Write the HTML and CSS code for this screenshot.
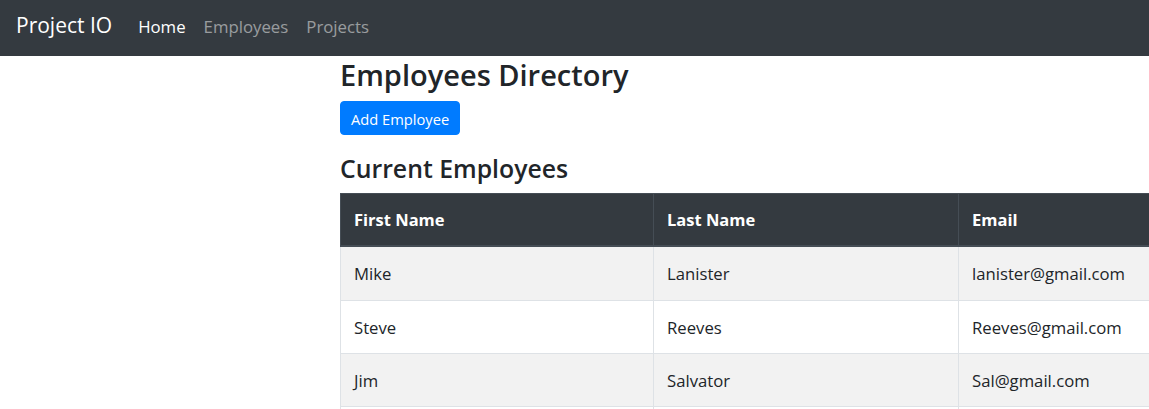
FILE: index.html
```html
<!DOCTYPE html>
<html lang="en">
<head>
<meta charset="utf-8">
<title>Project IO</title>
<link rel="stylesheet" href="styles.css">
</head>
<body>
<nav class="navbar">
  <a class="brand" href="#">Project IO</a>
  <ul class="nav">
    <li><a class="nav-link active" href="#">Home</a></li>
    <li><a class="nav-link" href="#">Employees</a></li>
    <li><a class="nav-link" href="#">Projects</a></li>
  </ul>
</nav>
<main class="container">
  <h2 class="title">Employees Directory</h2>
  <div class="actions"><button class="btn">Add Employee</button></div>
  <h3 class="subtitle">Current Employees</h3>
  <table class="table">
    <thead>
      <tr>
        <th class="c1">First Name</th>
        <th class="c2">Last Name</th>
        <th class="c3">Email</th>
      </tr>
    </thead>
    <tbody>
      <tr><td>Mike</td><td>Lanister</td><td>lanister@gmail.com</td></tr>
      <tr><td>Steve</td><td>Reeves</td><td>Reeves@gmail.com</td></tr>
      <tr><td>Jim</td><td>Salvator</td><td>Sal@gmail.com</td></tr>
      <tr><td>&nbsp;</td><td>&nbsp;</td><td>&nbsp;</td></tr>
    </tbody>
  </table>
</main>
</body>
</html>
```
FILE: styles.css
```css
html, body {
  overflow: hidden;
}
body {
  margin: 0;
  font-family: "Open Sans", "Noto Sans", sans-serif;
  color: #212529;
  background: #fff;
}
.navbar {
  display: flex;
  align-items: baseline;
  box-sizing: border-box;
  height: 56px;
  padding: 10px 16px 0;
  background: #343a40;
}
.brand {
  font-size: 21px;
  line-height: 30px;
  color: #fff;
  text-decoration: none;
  margin-right: 17px;
}
.nav {
  display: flex;
  list-style: none;
  margin: 0;
  padding: 0;
}
.nav-link {
  display: block;
  padding: 0 9px;
  font-size: 16.8px;
  line-height: 24px;
  color: rgba(255, 255, 255, 0.5);
  text-decoration: none;
}
.nav-link.active {
  color: #fff;
}
.container {
  box-sizing: border-box;
  width: 1140px;
  margin-left: 325px;
  padding: 0 15px;
}
.title {
  margin: 0 0 7px;
  font-size: 29px;
  line-height: 38px;
  font-weight: 600;
}
.actions {
  display: flex;
}
.btn {
  box-sizing: border-box;
  height: 34px;
  padding: 1px 10px 0;
  border: 1px solid #007bff;
  border-radius: 4px;
  background: #007bff;
  color: #fff;
  font-family: inherit;
  font-size: 14.7px;
  line-height: 30px;
}
.subtitle {
  margin: 17px 0 9px;
  font-size: 24.8px;
  line-height: 32px;
  font-weight: 600;
}
.table {
  width: 1110px;
  table-layout: fixed;
  border-collapse: separate;
  border-spacing: 0;
  font-size: 16.7px;
  line-height: 24px;
}
.table th, .table td {
  text-align: left;
  padding: 15px 13px 13px;
  border-right: 1px solid #dee2e6;
  vertical-align: top;
}
.table th:first-child, .table td:first-child {
  border-left: 1px solid #dee2e6;
}
.c1 { width: 286px; }
.c2 { width: 278px; }
.table th {
  background: #343a40;
  color: #fff;
  font-weight: 700;
  font-size: 16.5px;
  padding: 14px 13px 13px;
  border-top: 1px solid #454d55;
  border-bottom: 2px solid #454d55;
  border-right-color: #454d55;
}
.table th:first-child {
  border-left-color: #454d55;
}
.table td {
  border-top: 1px solid #dee2e6;
}
.table tbody tr:first-child td {
  border-top: 0;
  padding-top: 15px;
  padding-bottom: 14px;
}
.table tbody tr:nth-child(odd) td {
  background: #f2f2f2;
}
```
